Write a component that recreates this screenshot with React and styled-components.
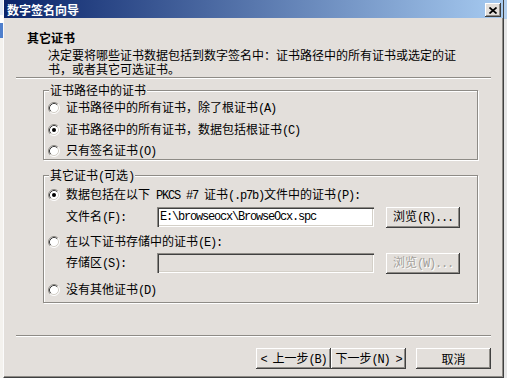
import React from "react";
import styled, { createGlobalStyle } from "styled-components";

const FACE = "#e3dfdb";
const SHADE = "#8e8b86";
const CJK = `"Noto Sans CJK SC", "Noto Sans", sans-serif`;
const MONO = `"Liberation Mono", monospace`;

const GlobalStyle = createGlobalStyle`
  html, body {
    margin: 0;
    padding: 0;
  }
  body {
    width: 507px;
    height: 378px;
    overflow: hidden;
    background: #f2f2f2;
    font-family: ${CJK};
    font-size: 12px;
    line-height: 14px;
    color: #000;
  }
`;

const Screen = styled.div`
  display: flex;
  width: 507px;
  height: 378px;
`;

const Backdrop = styled.div`
  width: 3px;
  flex: none;
  background: ${(p) => p.$bg};
`;

const Window = styled.div`
  width: 501px;
  height: 378px;
  flex: none;
  box-sizing: border-box;
  display: flex;
  flex-direction: column;
  background: ${FACE};
  border-left: 1px solid #fbfbfb;
  border-right: 1px solid #404040;
  border-bottom: 1px solid #404040;
  box-shadow: inset -1px -1px ${SHADE};
`;

const TitleBar = styled.div`
  height: 18px;
  flex: none;
  box-sizing: border-box;
  display: flex;
  align-items: flex-start;
  justify-content: space-between;
  padding: 3px 2px 0 3px;
  background: linear-gradient(to right, #0a246a, #a6caf0);
  color: #fff;
  font-weight: 700;
`;

const CloseButton = styled.div`
  width: 16px;
  height: 14px;
  display: flex;
  align-items: center;
  justify-content: center;
  background: ${FACE};
  box-shadow: inset -1px -1px #404040, inset 1px 1px #fff,
    inset -2px -2px ${SHADE};
`;

const Header = styled.div`
  padding: 13px 12px 0 23px;
`;

const HeaderTitle = styled.div`
  font-weight: 700;
`;

const HeaderText = styled.p`
  margin: 3px 0 0 21px;
  line-height: 14px;
`;

const Rule = styled.div`
  height: 0;
  margin: ${(p) => p.$top}px 12px 0;
  border-top: 1px solid ${SHADE};
  border-bottom: 1px solid #fff;
`;

const Group = styled.div`
  margin: ${(p) => p.$top}px 25px 0 39px;
  padding: 0 0 ${(p) => p.$bottom}px 4px;
  border: 1px solid ${SHADE};
  box-shadow: inset 1px 1px #fff, 1px 1px #fff;
  display: flex;
  flex-direction: column;
`;

const Caption = styled.div`
  align-self: flex-start;
  margin: -8px 0 0 1px;
  padding: 0 1px;
  background: ${FACE};
`;

const Option = styled.label`
  display: flex;
  align-items: center;
  gap: 6px;
  height: 21px;
  margin-top: ${(p) => p.$top || 0}px;
  margin-bottom: ${(p) => p.$bottom || 0}px;
  white-space: nowrap;
`;

const FieldRow = styled.div`
  display: flex;
  align-items: center;
  height: 20px;
  margin-top: ${(p) => p.$top}px;
  padding-left: 18px;
`;

const FieldLabel = styled.span`
  width: 91px;
  flex: none;
`;

const TextBox = styled.input`
  width: 217px;
  height: 20px;
  flex: none;
  box-sizing: border-box;
  margin: 0 12px 0 0;
  padding: 0 3px;
  border: none;
  outline: none;
  background: ${(p) => (p.disabled ? FACE : "#fff")};
  box-shadow: inset 1px 1px ${SHADE}, inset 2px 2px #404040,
    inset -1px -1px #fff, inset -2px -2px #d4d0c8;
  font-family: ${MONO};
  font-size: 12px;
  letter-spacing: -1.2px;
  color: #000;
`;

const Button = styled.button`
  width: ${(p) => p.$w}px;
  height: 21px;
  flex: none;
  padding: 0;
  border: none;
  background: ${FACE};
  font-family: ${CJK};
  font-size: 12px;
  line-height: 14px;
  white-space: nowrap;
  color: ${(p) => (p.disabled ? "#a29f9a" : "#000")};
  text-shadow: ${(p) => (p.disabled ? "1px 1px #fff" : "none")};
  box-shadow: inset -1px -1px #404040, inset 1px 1px #fff,
    inset -2px -2px ${SHADE};
`;

const ButtonBar = styled.div`
  display: flex;
  justify-content: flex-end;
  margin-top: 11px;
  padding-right: 12px;
`;

const Gap = styled.div`
  width: 10px;
`;

const Key = styled.span`
  font-family: ${MONO};
  letter-spacing: -1.2px;
`;

function Radio({ checked }) {
  return (
    <svg width="12" height="12" viewBox="0 0 12 12">
      <circle cx="6" cy="6" r="5" fill="#fff" />
      <path d="M2.11 9.89A5.5 5.5 0 0 1 9.89 2.11" fill="none" stroke={SHADE} />
      <path d="M9.89 2.11A5.5 5.5 0 0 1 2.11 9.89" fill="none" stroke="#fff" />
      <path d="M2.82 9.18A4.5 4.5 0 0 1 9.18 2.82" fill="none" stroke="#404040" />
      <path d="M9.18 2.82A4.5 4.5 0 0 1 2.82 9.18" fill="none" stroke="#d4d0c8" />
      {checked && <circle cx="6" cy="6" r="2" fill="#000" />}
    </svg>
  );
}

export default function App() {
  return (
    <Screen>
      <GlobalStyle />
      <Backdrop $bg="linear-gradient(#dfe8f5 0 15px, #fff 15px 23px, #4f7fcc 23px 38px, #f4f2ee 38px)" />
      <Window>
        <TitleBar>
          <span>数字签名向导</span>
          <CloseButton>
            <svg width="8" height="7" viewBox="0 0 8 7">
              <path d="M0.5 0.5L7.5 6.5M7.5 0.5L0.5 6.5" stroke="#000" strokeWidth="1.7" />
            </svg>
          </CloseButton>
        </TitleBar>

        <Header>
          <HeaderTitle>其它证书</HeaderTitle>
          <HeaderText>
            决定要将哪些证书数据包括到数字签名中：证书路径中的所有证书或选定的证
            <br />
            书，或者其它可选证书。
          </HeaderText>
        </Header>
        <Rule $top={1} />

        <Group $top={11} $bottom={0}>
          <Caption>证书路径中的证书</Caption>
          <Option>
            <Radio />
            <span>证书路径中的所有证书，除了根证书<Key>(A)</Key></span>
          </Option>
          <Option $top={1}>
            <Radio checked />
            <span>证书路径中的所有证书，数据包括根证书<Key>(C)</Key></span>
          </Option>
          <Option $bottom={-2}>
            <Radio />
            <span>只有签名证书<Key>(O)</Key></span>
          </Option>
        </Group>

        <Group $top={15} $bottom={2}>
          <Caption>
            其它证书<Key>(</Key>可选<Key>)</Key>
          </Caption>
          <Option>
            <Radio checked />
            <span>
              数据包括在以下<Key> PKCS #7 </Key>证书<Key>(.p7b)</Key>文件中的证书<Key>(P):</Key>
            </span>
          </Option>
          <FieldRow $top={2}>
            <FieldLabel>
              文件名<Key>(F):</Key>
            </FieldLabel>
            <TextBox readOnly value="E:\browseocx\BrowseOcx.spc" />
            <Button $w={74}>
              浏览<Key>(R)...</Key>
            </Button>
          </FieldRow>
          <Option $top={4}>
            <Radio />
            <span>
              在以下证书存储中的证书<Key>(E):</Key>
            </span>
          </Option>
          <FieldRow $top={1}>
            <FieldLabel>
              存储区<Key>(S):</Key>
            </FieldLabel>
            <TextBox readOnly disabled value="" />
            <Button $w={74} disabled>
              浏览<Key>(W)...</Key>
            </Button>
          </FieldRow>
          <Option $top={6}>
            <Radio />
            <span>
              没有其他证书<Key>(D)</Key>
            </span>
          </Option>
        </Group>

        <Rule $top={32} />
        <ButtonBar>
          <Button $w={75}>
            <Key>&lt; </Key>上一步<Key>(B)</Key>
          </Button>
          <Button $w={75}>
            下一步<Key>(N) &gt;</Key>
          </Button>
          <Gap />
          <Button $w={75}>取消</Button>
        </ButtonBar>
      </Window>
      <Backdrop $bg="linear-gradient(#b4d0ee 0 19px, #e6e6e6 19px)" />
    </Screen>
  );
}
